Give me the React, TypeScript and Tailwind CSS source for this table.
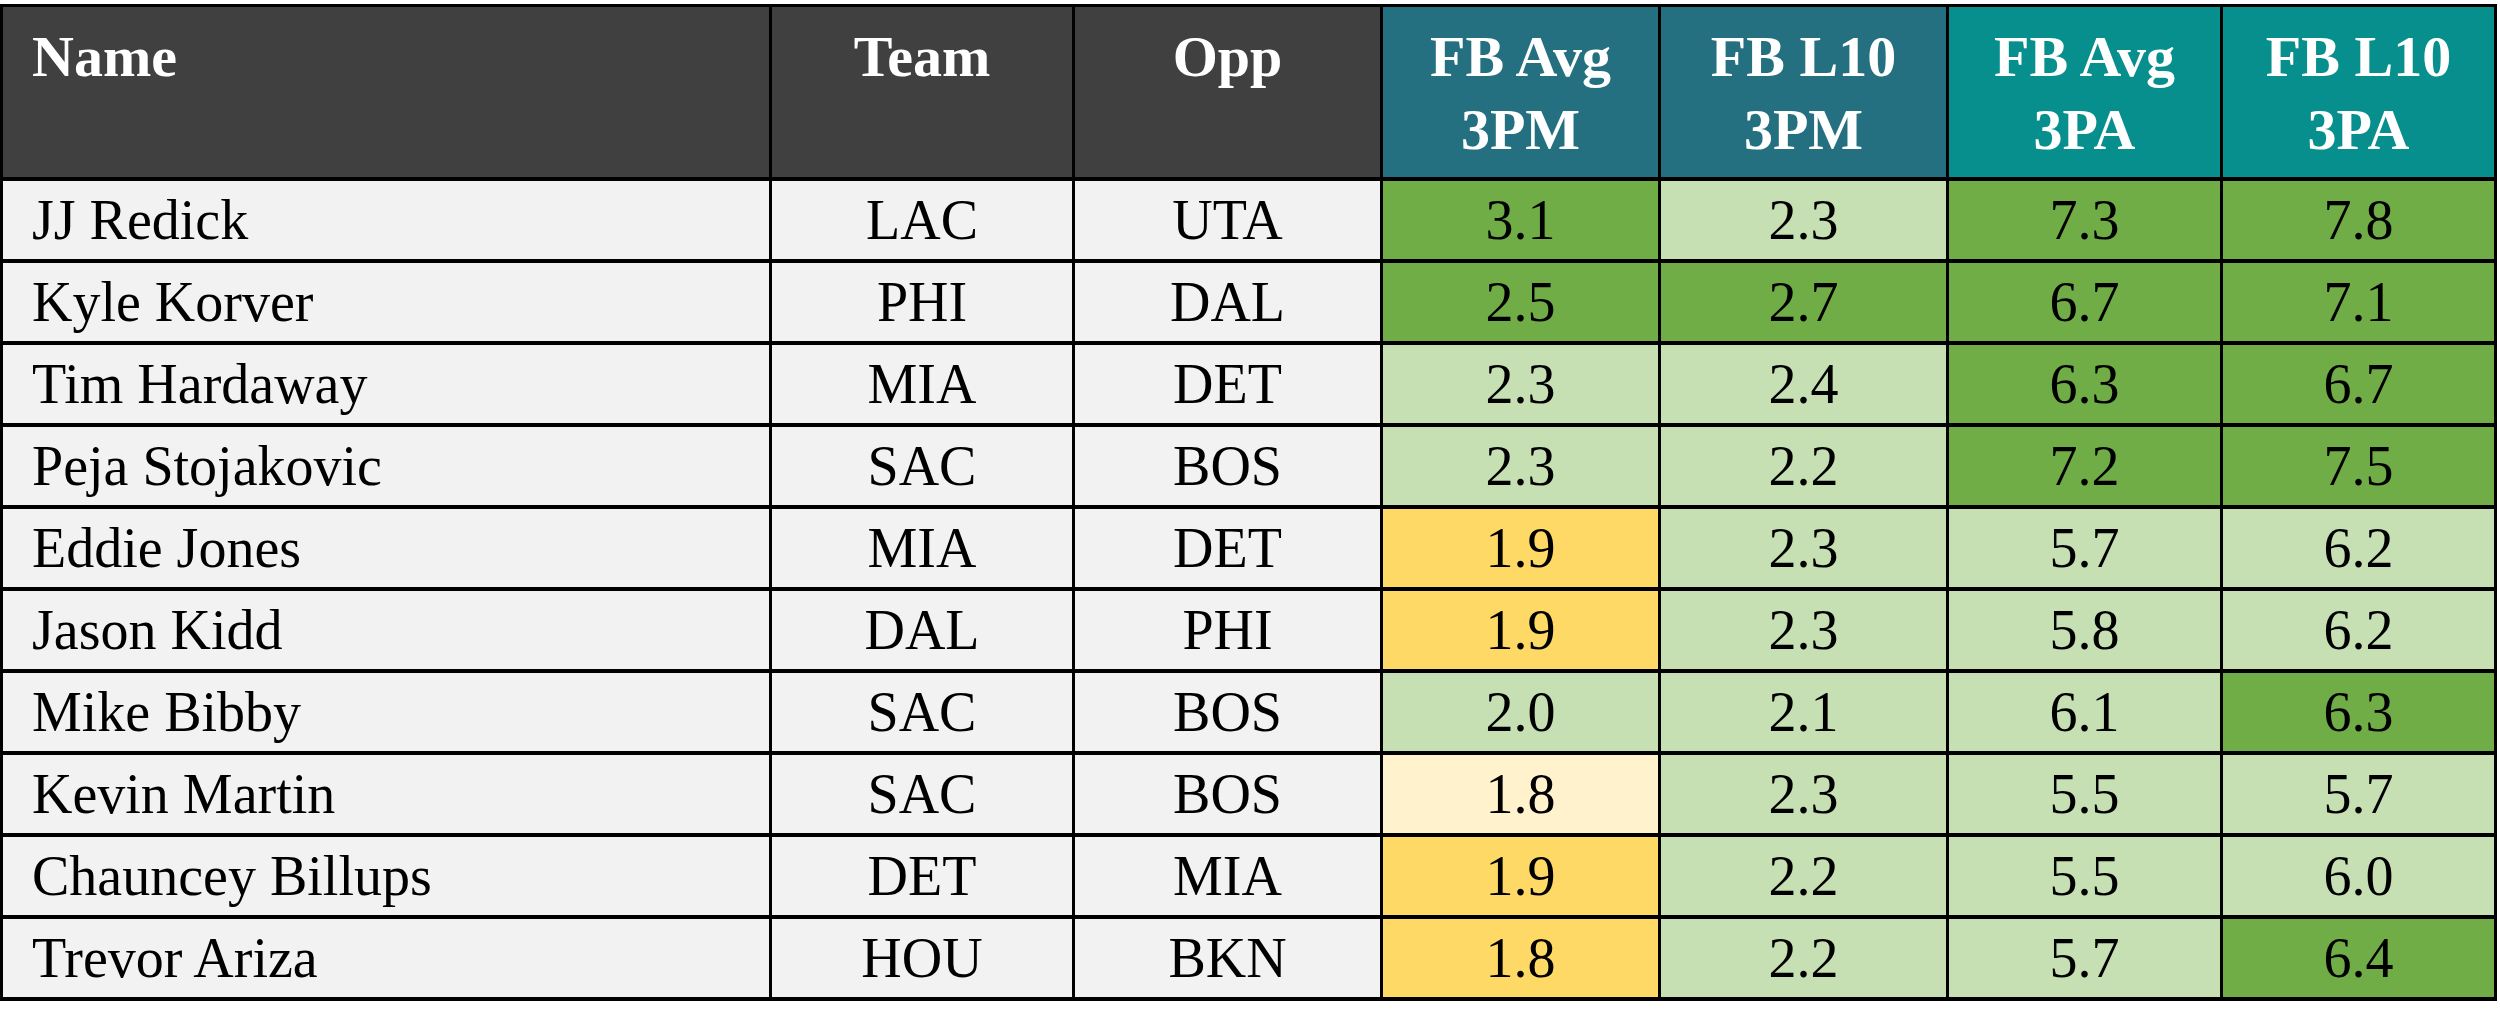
import { Fragment } from 'react';

const G = 'bg-[#70ad47]';
const LG = 'bg-[#c6e0b4]';
const Y = 'bg-[#ffd966]';
const LY = 'bg-[#fff2cc]';

type Row = {
  name: string;
  team: string;
  opp: string;
  vals: [string, string][];
};

const rows: Row[] = [
  { name: 'JJ Redick', team: 'LAC', opp: 'UTA', vals: [['3.1', G], ['2.3', LG], ['7.3', G], ['7.8', G]] },
  { name: 'Kyle Korver', team: 'PHI', opp: 'DAL', vals: [['2.5', G], ['2.7', G], ['6.7', G], ['7.1', G]] },
  { name: 'Tim Hardaway', team: 'MIA', opp: 'DET', vals: [['2.3', LG], ['2.4', LG], ['6.3', G], ['6.7', G]] },
  { name: 'Peja Stojakovic', team: 'SAC', opp: 'BOS', vals: [['2.3', LG], ['2.2', LG], ['7.2', G], ['7.5', G]] },
  { name: 'Eddie Jones', team: 'MIA', opp: 'DET', vals: [['1.9', Y], ['2.3', LG], ['5.7', LG], ['6.2', LG]] },
  { name: 'Jason Kidd', team: 'DAL', opp: 'PHI', vals: [['1.9', Y], ['2.3', LG], ['5.8', LG], ['6.2', LG]] },
  { name: 'Mike Bibby', team: 'SAC', opp: 'BOS', vals: [['2.0', LG], ['2.1', LG], ['6.1', LG], ['6.3', G]] },
  { name: 'Kevin Martin', team: 'SAC', opp: 'BOS', vals: [['1.8', LY], ['2.3', LG], ['5.5', LG], ['5.7', LG]] },
  { name: 'Chauncey Billups', team: 'DET', opp: 'MIA', vals: [['1.9', Y], ['2.2', LG], ['5.5', LG], ['6.0', LG]] },
  { name: 'Trevor Ariza', team: 'HOU', opp: 'BKN', vals: [['1.8', Y], ['2.2', LG], ['5.7', LG], ['6.4', G]] },
];

const headers: { label: string[]; bg: string; left?: boolean }[] = [
  { label: ['Name'], bg: 'bg-[#404040]', left: true },
  { label: ['Team'], bg: 'bg-[#404040]' },
  { label: ['Opp'], bg: 'bg-[#404040]' },
  { label: ['FB Avg', '3PM'], bg: 'bg-[#246f80]' },
  { label: ['FB L10', '3PM'], bg: 'bg-[#246f80]' },
  { label: ['FB Avg', '3PA'], bg: 'bg-[#078f8e]' },
  { label: ['FB L10', '3PA'], bg: 'bg-[#078f8e]' },
];

export default function App() {
  return (
    <div className="min-h-screen bg-white pt-[4px] font-['Liberation_Serif','Times_New_Roman',serif]">
      <div className="grid w-[2497px] grid-cols-[766px_300px_305px_275px_285px_271px_271px] grid-rows-[170px_repeat(10,78px)] gap-x-[3px] gap-y-[4px] bg-black p-[3px] pb-[4px]">
        {headers.map((h, i) => (
          <div
            key={i}
            className={`${h.bg} pt-[13px] text-[58px] font-bold leading-[73px] text-white ${h.left ? 'pl-[29px] text-left' : 'text-center'}`}
          >
            {h.label.map((l) => (
              <div key={l}>{l}</div>
            ))}
          </div>
        ))}
        {rows.map((r) => (
          <Fragment key={r.name}>
            <div className="flex items-center bg-[#f2f2f2] pl-[29px] text-[56px] text-black">{r.name}</div>
            <div className="flex items-center justify-center bg-[#f2f2f2] text-[56px] text-black">{r.team}</div>
            <div className="flex items-center justify-center bg-[#f2f2f2] text-[56px] text-black">{r.opp}</div>
            {r.vals.map(([v, bg], j) => (
              <div key={j} className={`flex items-center justify-center ${bg} text-[56px] text-black`}>
                {v}
              </div>
            ))}
          </Fragment>
        ))}
      </div>
    </div>
  );
}
